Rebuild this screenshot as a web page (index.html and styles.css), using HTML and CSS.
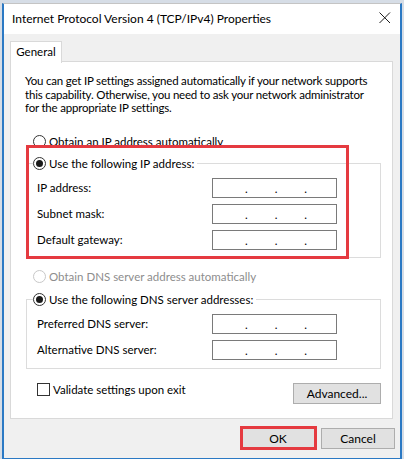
FILE: index.html
```html
<!DOCTYPE html>
<html lang="en">
<head>
<title>Internet Protocol Version 4 (TCP/IPv4) Properties</title>
<link rel="stylesheet" href="styles.css">
</head>
<body>
<div class="screen">
  <div class="window">
    <div class="titlebar">
      <span class="title">Internet Protocol Version 4 (TCP/IPv4) Properties</span>
      <svg class="close" width="12" height="12" viewBox="0 0 12 12">
        <path d="M0.5 0.5 L11 11 M11 0.5 L0.5 11" stroke="#1a1a1a" stroke-width="1" fill="none"/>
      </svg>
    </div>

    <div class="dlg-body">
      <div class="tabs"><span class="tab">General</span></div>

      <div class="panel">
        <p class="intro">You can get IP settings assigned automatically if your network supports this capability. Otherwise, you need to ask your network administrator for the appropriate IP settings.</p>

        <div class="opt first-opt"><span class="radio"></span>Obtain an IP address automatically</div>

        <fieldset class="group ip-group">
          <legend class="opt"><span class="radio on"></span>Use the following IP address:</legend>
          <div class="field"><span>IP address:</span><span class="ip-box"><i>.</i><i>.</i><i>.</i></span></div>
          <div class="field"><span>Subnet mask:</span><span class="ip-box"><i>.</i><i>.</i><i>.</i></span></div>
          <div class="field"><span>Default gateway:</span><span class="ip-box"><i>.</i><i>.</i><i>.</i></span></div>
        </fieldset>

        <div class="opt disabled dns-auto"><span class="radio"></span>Obtain DNS server address automatically</div>

        <fieldset class="group dns-group">
          <legend class="opt"><span class="radio on"></span>Use the following DNS server addresses:</legend>
          <div class="field"><span>Preferred DNS server:</span><span class="ip-box"><i>.</i><i>.</i><i>.</i></span></div>
          <div class="field"><span>Alternative DNS server:</span><span class="ip-box"><i>.</i><i>.</i><i>.</i></span></div>
        </fieldset>

        <div class="bottom-row">
          <div class="opt check-opt"><span class="checkbox"></span>Validate settings upon exit</div>
          <button class="btn adv-btn">Advanced...</button>
        </div>
      </div>

      <div class="actions">
        <button class="btn ok-btn">OK</button>
        <button class="btn">Cancel</button>
      </div>
    </div>
  </div>

  <!-- red highlight marks drawn over the screenshot -->
  <div class="mark mark-ip"></div>
  <div class="mark mark-ok"></div>
</div>
</body>
</html>
```

FILE: styles.css
```css
body{
    margin: 0;
    background-color: #d6dde6;
    font-family: Lato, "Noto Sans", sans-serif;
    font-size: 11.5px;
    color: #000;
}
.screen{
    position: relative;
    width: 404px;
    height: 459px;
    overflow: hidden;
}
.window{
    margin: 3px 0 0 2px;
    width: 396px;
    height: 454px;
    background-color: #f0f0f0;
    border-top: 1px solid #c4c4c4;
    border-left: 2px solid #2b79c4;
    border-right: 2px solid #2b79c4;
    border-bottom: 2px solid #2b79c4;
}
.titlebar{
    height: 30px;
    background-color: #fff;
    display: flex;
    align-items: center;
    justify-content: space-between;
    padding: 0 9px 0 8px;
}
.title{
    font-size: 12px;
    margin-top: -1px;
}
.close{
    margin-top: -3px;
}
.dlg-body{
    padding: 7px 5px 0 6px;
}
.tabs{
    display: flex;
    height: 20px;
}
.tab{
    width: 50px;
    height: 21px;
    background-color: #fff;
    border: 1px solid #d9d9d9;
    border-bottom: none;
    text-align: center;
    line-height: 20px;
    position: relative;
    z-index: 1;
}
.panel{
    height: 356px;
    margin-right: 2px;
    background-color: #fff;
    border: 1px solid #d9d9d9;
}
.intro{
    margin: 12px 18px 0 14px;
    line-height: 13.5px;
    letter-spacing: -0.2px;
}
.opt{
    display: flex;
    align-items: center;
    height: 15px;
    line-height: 15px;
    white-space: nowrap;
}
.radio{
    width: 11px;
    height: 11px;
    border: 1px solid #333;
    border-radius: 50%;
    background-color: #fff;
    margin-right: 3px;
    position: relative;
    flex: none;
}
.radio.on::after{
    content: "";
    position: absolute;
    left: 2px;
    top: 2px;
    width: 7px;
    height: 7px;
    border-radius: 50%;
    background-color: #1a1a1a;
}
.first-opt{
    margin: 19px 0 0 22px;
}
.group{
    margin: 7px 11px 0 15px;
    padding: 0 0 7px 6px;
    border: 1px solid #dcdcdc;
    min-width: 0;
}
.group legend{
    padding: 0 3px 0 0;
}
.field{
    display: grid;
    grid-template-columns: 175px 125px;
    align-items: center;
    margin: 6px 0 0 4px;
}
.group legend + .field{
    margin-top: 7px;
}
.ip-box{
    height: 18px;
    border: 1px solid #7a7a7a;
    background-color: #fff;
    display: flex;
    justify-content: center;
    gap: 27px;
    padding-left: 3px;
}
.ip-box i{
    font-style: normal;
    line-height: 20px;
}
.dns-auto{
    margin: 11px 0 0 22px;
}
.disabled{
    color: #8d8d8d;
}
.disabled .radio{
    border-color: #c8c8c8;
}
.dns-group{
    margin-top: 8px;
    padding-bottom: 8px;
}
.bottom-row{
    display: flex;
    justify-content: space-between;
    align-items: flex-start;
    margin: 14px 11px 0 26px;
}
.check-opt{
    margin-top: -1px;
}
.checkbox{
    width: 11px;
    height: 11px;
    border: 1px solid #333;
    background-color: #fff;
    margin-right: 3px;
}
.btn{
    font-family: Lato, "Noto Sans", sans-serif;
    font-size: 12px;
    color: #000;
    background-color: #e1e1e1;
    border: 1px solid #adadad;
    height: 21px;
    padding: 0;
}
.adv-btn{
    width: 88px;
}
.actions{
    display: flex;
    justify-content: flex-end;
    gap: 6px;
    margin-top: 9px;
}
.actions .btn{
    width: 74px;
}
.ok-btn{
    border: 1px solid #0078d7;
}
.mark{
    position: absolute;
    border: 3px solid #e53a40;
}
.mark-ip{
    left: 26px;
    top: 145px;
    width: 317px;
    height: 108px;
}
.mark-ok{
    left: 240px;
    top: 426px;
    width: 71px;
    height: 18px;
}
```
